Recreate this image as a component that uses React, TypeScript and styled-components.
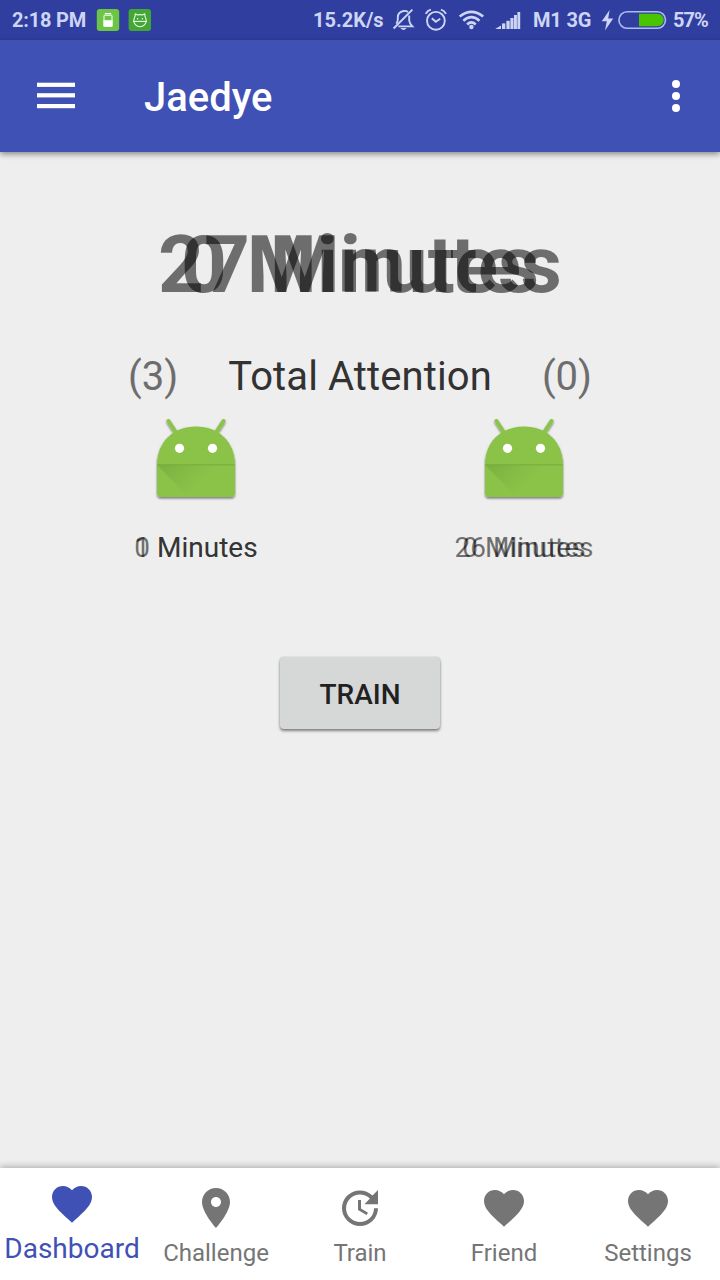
import React from "react";
import styled, { createGlobalStyle } from "styled-components";

const GlobalStyle = createGlobalStyle`
  * { box-sizing: border-box; }
  body { margin: 0; background: #eeeeee; font-family: Roboto, "Liberation Sans", sans-serif; }
  svg { display: block; flex: none; }
`;

const Screen = styled.div`
  width: 720px;
  height: 1280px;
  display: flex;
  flex-direction: column;
  background: #eeeeee;
  overflow: hidden;
`;

const StatusBar = styled.div`
  height: 40px;
  flex: none;
  background: #303f9f;
  color: #cdd5f5;
  display: flex;
  align-items: center;
  padding: 0 12px;
  font-size: 20px;
  line-height: 24px;
  font-weight: 700;
`;

const StatusText = styled.span<{ $width: number; $gap?: number; $tracking?: number }>`
  width: ${(p) => p.$width}px;
  margin-right: ${(p) => p.$gap ?? 0}px;
  letter-spacing: ${(p) => p.$tracking ?? 0}px;
  white-space: nowrap;
  flex: none;
`;

const StatusIcon = styled.svg<{ $gap?: number }>`
  margin-right: ${(p) => p.$gap ?? 0}px;
`;

const Spacer = styled.div`
  flex: 1;
`;

const Toolbar = styled.header`
  height: 112px;
  flex: none;
  background: #3f51b5;
  display: flex;
  align-items: center;
  padding: 0 20px 0 32px;
  box-shadow: 0 2px 6px rgba(0, 0, 0, 0.45);
`;

const IconButton = styled.button`
  border: 0;
  padding: 0;
  background: none;
  color: #ffffff;
`;

const Title = styled.h1`
  margin: 3px 0 0 64px;
  flex: 1;
  color: #ffffff;
  font-size: 40px;
  line-height: 47px;
  font-weight: 500;
`;

const Content = styled.main`
  flex: 1;
  display: flex;
  flex-direction: column;
  align-items: center;
  padding-top: 66px;
`;

const Stack = styled.div<{ $size: number; $line: number; $bold?: boolean }>`
  display: grid;
  justify-items: center;
  font-size: ${(p) => p.$size}px;
  line-height: ${(p) => p.$line}px;
  font-weight: ${(p) => (p.$bold ? 700 : 400)};
  color: rgba(0, 0, 0, 0.54);
  white-space: nowrap;
`;

const Layer = styled.span`
  grid-area: 1 / 1;
`;

const Summary = styled.div`
  margin-top: 41px;
  width: 464px;
  display: flex;
  justify-content: space-between;
  font-size: 40px;
  line-height: 47px;
  color: #6d6d6d;
`;

const SummaryTitle = styled.span`
  color: #323232;
  letter-spacing: 0.1px;
`;

const Players = styled.div`
  margin-top: 12px;
  width: 464px;
  display: flex;
  justify-content: space-between;
`;

const Player = styled.div`
  width: 136px;
  display: flex;
  flex-direction: column;
  align-items: center;
  gap: 23px;
`;

const TrainButton = styled.button`
  margin-top: 93px;
  width: 160px;
  height: 72px;
  border: 0;
  border-radius: 4px;
  padding: 2px 0 0;
  background: #d6d7d7;
  box-shadow: 0 2px 3px rgba(0, 0, 0, 0.45), 0 0 2px rgba(0, 0, 0, 0.15);
  color: #212121;
  font: 500 28px/33px Roboto, "Liberation Sans", sans-serif;
`;

const BottomNav = styled.nav`
  height: 112px;
  flex: none;
  display: grid;
  grid-template-columns: repeat(5, 1fr);
  background: #ffffff;
  box-shadow: 0 -1px 7px rgba(0, 0, 0, 0.3);
`;

const NavItem = styled.a<{ $active?: boolean }>`
  display: flex;
  flex-direction: column;
  align-items: center;
  padding-top: ${(p) => (p.$active ? 12 : 16)}px;
  gap: ${(p) => (p.$active ? 4 : 7)}px;
  color: ${(p) => (p.$active ? "#3f51b5" : "#757575")};
  font-size: ${(p) => (p.$active ? 28 : 24)}px;
  line-height: ${(p) => (p.$active ? 33 : 28)}px;
  white-space: nowrap;
`;

const HEART =
  "M12 21.35l-1.45-1.32C5.4 15.36 2 12.28 2 8.5 2 5.42 4.42 3 7.5 3c1.74 0 3.41.81 4.5 2.09C13.09 3.81 14.76 3 16.5 3 19.58 3 22 5.42 22 8.5c0 3.78-3.4 6.86-8.55 11.54L12 21.35z";
const PLACE =
  "M12 2C8.13 2 5 5.13 5 9c0 5.25 7 13 7 13s7-7.75 7-13c0-3.87-3.13-7-7-7zm0 9.5c-1.38 0-2.5-1.12-2.5-2.5s1.12-2.5 2.5-2.5 2.5 1.12 2.5 2.5-1.12 2.5-2.5 2.5z";
const UPDATE =
  "M21 10.12h-6.78l2.74-2.82c-2.73-2.7-7.15-2.8-9.88-.1-2.73 2.71-2.73 7.08 0 9.79s7.15 2.71 9.88 0C18.32 15.65 19 14.08 19 12.1h2c0 1.98-.88 4.55-2.64 6.29-3.51 3.48-9.21 3.48-12.72 0-3.5-3.47-3.53-9.11-.02-12.58s9.14-3.47 12.65 0L21 3v7.12zM12.5 8v4.25l3.5 2.08-.72 1.21L11 13V8h1.5z";

const navItems = [
  { label: "Dashboard", path: HEART, active: true },
  { label: "Challenge", path: PLACE },
  { label: "Train", path: UPDATE },
  { label: "Friend", path: HEART },
  { label: "Settings", path: HEART },
];

function Overlaid({ texts, size, line, bold }: { texts: string[]; size: number; line: number; bold?: boolean }) {
  return (
    <Stack $size={size} $line={line} $bold={bold}>
      {texts.map((t) => (
        <Layer key={t}>{t}</Layer>
      ))}
    </Stack>
  );
}

function Robot({ id }: { id: string }) {
  return (
    <svg width="96" height="96" viewBox="0 0 96 96">
      <defs>
        <linearGradient id={id} gradientUnits="userSpaceOnUse" x1="12" y1="50" x2="44" y2="80">
          <stop offset="0" stopColor="#33691e" stopOpacity="0.2" />
          <stop offset="1" stopColor="#33691e" stopOpacity="0" />
        </linearGradient>
        <filter id={`${id}-s`} x="-10%" y="-10%" width="120%" height="120%">
          <feDropShadow dx="0" dy="1.5" stdDeviation="0.9" floodColor="#000000" floodOpacity="0.5" />
        </filter>
      </defs>
      <g filter={`url(#${id}-s)`}>
        <path d="M20.5 9 L28 20.5 M75.5 9 L68 20.5" stroke="#8bc34a" strokeWidth="4" strokeLinecap="round" />
        <path d="M9 53 C9 30 25 14.5 48 14.5 S87 30 87 53 V81 Q87 85 83 85 H13 Q9 85 9 81 Z" fill="#8bc34a" />
      </g>
      <path d="M9 53 H87 V81 Q87 85 83 85 H41 L9 53 Z" fill={`url(#${id})`} />
      <path d="M9 52.8 H87" stroke="#689f38" strokeOpacity="0.65" strokeWidth="1" />
      <circle cx="31.5" cy="36.3" r="4.6" fill="#ffffff" />
      <circle cx="64.5" cy="36.3" r="4.6" fill="#ffffff" />
    </svg>
  );
}

function BatteryAppIcon() {
  return (
    <StatusIcon $gap={8} width="24" height="24" viewBox="0 0 24 24">
      <rect x="0.8" y="1" width="22.4" height="22" rx="3" fill="#6cc644" />
      <rect x="8.8" y="5" width="6.4" height="1.2" fill="#ffffff" />
      <rect x="8" y="7.2" width="8" height="11" rx="0.8" fill="none" stroke="#ffffff" strokeWidth="1" />
      <rect x="7.5" y="12.2" width="9" height="6.6" fill="#ffffff" />
    </StatusIcon>
  );
}

function CatAppIcon() {
  return (
    <StatusIcon width="24" height="24" viewBox="0 0 24 24">
      <rect x="0.6" y="1" width="22.4" height="22" rx="3" fill="#43a637" />
      <g fill="none" stroke="#e8ffe4" strokeWidth="1.1" strokeLinejoin="round">
        <path d="M7 8.5 L7.3 5.8 L9.6 7 Q12 6.2 14.4 7 L16.7 5.8 L17 8.5 Q18.2 10.2 18.2 12.6 A6.2 6.2 0 0 1 5.8 12.6 Q5.8 10.2 7 8.5 Z" />
        <path d="M5 13.4 H19" />
      </g>
      <circle cx="9.6" cy="10.8" r="0.8" fill="#ffffff" />
      <circle cx="14.4" cy="10.8" r="0.8" fill="#ffffff" />
    </StatusIcon>
  );
}

export default function App() {
  return (
    <>
      <GlobalStyle />
      <Screen>
        <StatusBar>
          <StatusText $width={74} $gap={10} $tracking={-0.2}>2:18 PM</StatusText>
          <BatteryAppIcon />
          <CatAppIcon />
          <Spacer />
          <StatusText $width={70} $gap={9}>15.2K/s</StatusText>
          <StatusIcon $gap={9} width="24" height="24" viewBox="0 0 24 24" fill="none" stroke="currentColor" strokeWidth="1.9">
            <path d="M1.6 20.5 L20.4 1.6" />
            <path d="M4.2 15.6 Q5.8 14 5.8 11.5 V9.5 Q5.8 4 11.5 3 Q14 2.6 16 4 M17.2 7.6 V12.5 Q17.4 15.3 20.4 18.4 H6.4" />
            <path d="M8.4 20 Q11.6 24 14.6 20 Z" fill="currentColor" stroke="none" />
          </StatusIcon>
          <StatusIcon $gap={10} width="24" height="24" viewBox="0.6 0 24 24" fill="none" stroke="currentColor" strokeWidth="1.9">
            <circle cx="11.5" cy="12.8" r="8.9" />
            <path d="M7.4 10.2 L11.4 13.8 L15.8 10.8" />
            <path d="M1.4 5.8 Q3 2.6 6.5 1.7 M21.6 5.8 Q20 2.6 16.5 1.7" />
          </StatusIcon>
          <StatusIcon $gap={10} width="26" height="24" viewBox="0.6 0 26 24" fill="none" stroke="currentColor" strokeWidth="2.6">
            <path d="M1.2 8.6 Q13 -0.8 24.8 8.6" />
            <path d="M4.9 12.7 Q13 5.6 21.1 12.7" />
            <path d="M8.7 16.5 Q13 12.4 17.3 16.5" />
            <circle cx="13" cy="19" r="2.2" fill="currentColor" stroke="none" />
          </StatusIcon>
          <StatusIcon $gap={12} width="26" height="24" viewBox="0 0 26 24" fill="currentColor">
            <path d="M0.2 21 L6 17.4 V21 Z" />
            <rect x="7" y="15.4" width="3.3" height="5.6" />
            <rect x="11.4" y="12.8" width="3.3" height="8.2" />
            <rect x="15.4" y="10" width="3.1" height="11" />
            <rect x="19" y="7" width="2.9" height="14" />
            <rect x="22.4" y="4" width="2.8" height="17" />
          </StatusIcon>
          <StatusText $width={58} $gap={10} $tracking={-0.15}>M1 3G</StatusText>
          <StatusIcon $gap={4} width="13" height="24" viewBox="0 0 13 24">
            <path d="M8.6 2 L0.8 13.2 H5.8 L4 22.4 L12.2 10.4 H7.2 Z" fill="currentColor" />
          </StatusIcon>
          <StatusIcon $gap={6} width="49" height="24" viewBox="0 0 49 24">
            <rect x="0.9" y="3.7" width="46.6" height="16.6" rx="8.3" fill="none" stroke="#aebbf0" strokeWidth="1.6" />
            <path d="M21 5.8 H39.5 A6.2 6.2 0 0 1 39.5 18.2 H21 Z" fill="#48c400" />
          </StatusIcon>
          <StatusText $width={35} $tracking={-1}>57%</StatusText>
        </StatusBar>
        <Toolbar>
          <IconButton aria-label="Menu">
            <svg width="48" height="48" viewBox="0 0 48 48" fill="currentColor">
              <rect x="5" y="10.7" width="38" height="4.2" />
              <rect x="5" y="21.2" width="38" height="4.2" />
              <rect x="5" y="32" width="38" height="4.2" />
            </svg>
          </IconButton>
          <Title>Jaedye</Title>
          <IconButton aria-label="More options">
            <svg width="48" height="48" viewBox="0 0 24 24" fill="currentColor">
              <circle cx="12" cy="6" r="2" />
              <circle cx="12" cy="12" r="2" />
              <circle cx="12" cy="18" r="2" />
            </svg>
          </IconButton>
        </Toolbar>
        <Content>
          <Overlaid texts={["27 Minutes", "0 Minutes"]} size={80} line={94} bold />
          <Summary>
            <span>(3)</span>
            <SummaryTitle>Total Attention</SummaryTitle>
            <span>(0)</span>
          </Summary>
          <Players>
            <Player>
              <Robot id="robot-left" />
              <Overlaid texts={["0 Minutes", "1 Minutes"]} size={28} line={33} />
            </Player>
            <Player>
              <Robot id="robot-right" />
              <Overlaid texts={["26 Minutes", "0 Minutes"]} size={28} line={33} />
            </Player>
          </Players>
          <TrainButton>TRAIN</TrainButton>
        </Content>
        <BottomNav>
          {navItems.map((item) => (
            <NavItem key={item.label} $active={item.active}>
              <svg width="48" height="48" viewBox="0 0 24 24" fill="currentColor">
                <path d={item.path} />
              </svg>
              {item.label}
            </NavItem>
          ))}
        </BottomNav>
      </Screen>
    </>
  );
}
